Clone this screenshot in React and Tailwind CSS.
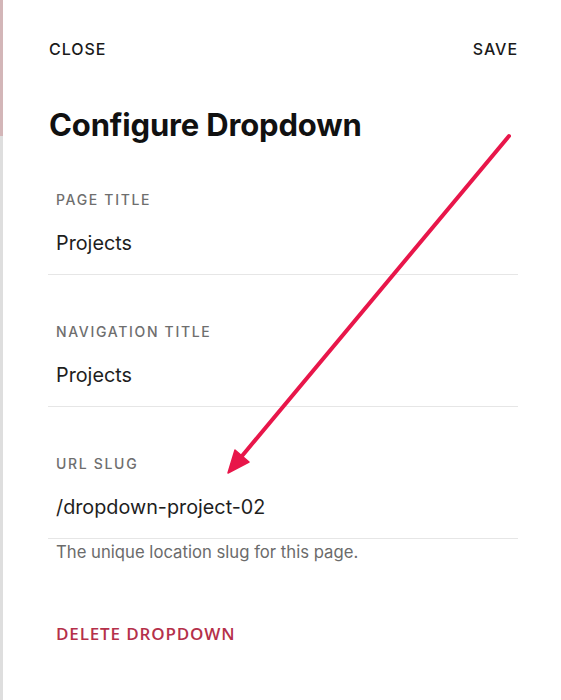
export default function App() {
  const fields = [
    { label: "PAGE TITLE", value: "Projects" },
    { label: "NAVIGATION TITLE", value: "Projects" },
    { label: "URL SLUG", value: "/dropdown-project-02", help: "The unique location slug for this page." },
  ];
  return (
    <div className="relative flex w-[561px] h-[700px] bg-white overflow-hidden" style={{ fontFamily: "Inter, 'Liberation Sans', sans-serif" }}>
      <div className="flex flex-col w-[3px] shrink-0">
        <div className="h-[136px] bg-[#d3b6b8]" />
        <div className="flex-1 bg-[#dedede]" />
      </div>
      <div className="flex-1 flex flex-col pl-[45px] pr-[43px]">
        <div className="flex justify-between pt-[39px] pl-[1px]">
          <span className="text-[16px] leading-5 font-medium tracking-[0.06em] text-[#1a1a1a]">CLOSE</span>
          <span className="text-[16px] leading-5 font-medium tracking-[0.06em] text-[#1a1a1a]">SAVE</span>
        </div>
        <h1 className="mt-[48px] pl-[1px] text-[31px] leading-9 font-bold tracking-[-0.005em] text-[#111]">Configure Dropdown</h1>
        <div className="mt-[47px] flex flex-col">
          {fields.map((f, i) => (
            <div key={i} className="flex flex-col">
              <div className={i === 0 ? "pt-0" : "pt-[47px]"}>
                <div className="pl-[8px] text-[14px] leading-5 font-medium tracking-[0.12em] text-[#6e6e6e]">{f.label}</div>
                <div className="pl-[8px] mt-[21px] text-[19.8px] leading-6 text-[#1e1e1e]">{f.value}</div>
              </div>
              <div className="mt-[19px] h-px bg-[#e6e6e6]" />
              {f.help && (
                <div className="pl-[8px] mt-[3px] text-[16.7px] leading-5 text-[#6b6b6b]">{f.help}</div>
              )}
            </div>
          ))}
        </div>
        <div className="mt-[62px] pl-[8px] text-[17px] leading-5 font-semibold tracking-[0.05em] text-[#b5304a]" style={{ fontFamily: "'Open Sans', sans-serif" }}>DELETE DROPDOWN</div>
      </div>
      <svg className="absolute inset-0 pointer-events-none" width="561" height="700" viewBox="0 0 561 700">
        <line x1="509" y1="136" x2="242" y2="456" stroke="#e8164a" strokeWidth="4" strokeLinecap="round" />
        <polygon points="228,473 249,462 235,450" fill="#e8164a" stroke="#e8164a" strokeWidth="1.5" strokeLinejoin="round" />
      </svg>
    </div>
  );
}
